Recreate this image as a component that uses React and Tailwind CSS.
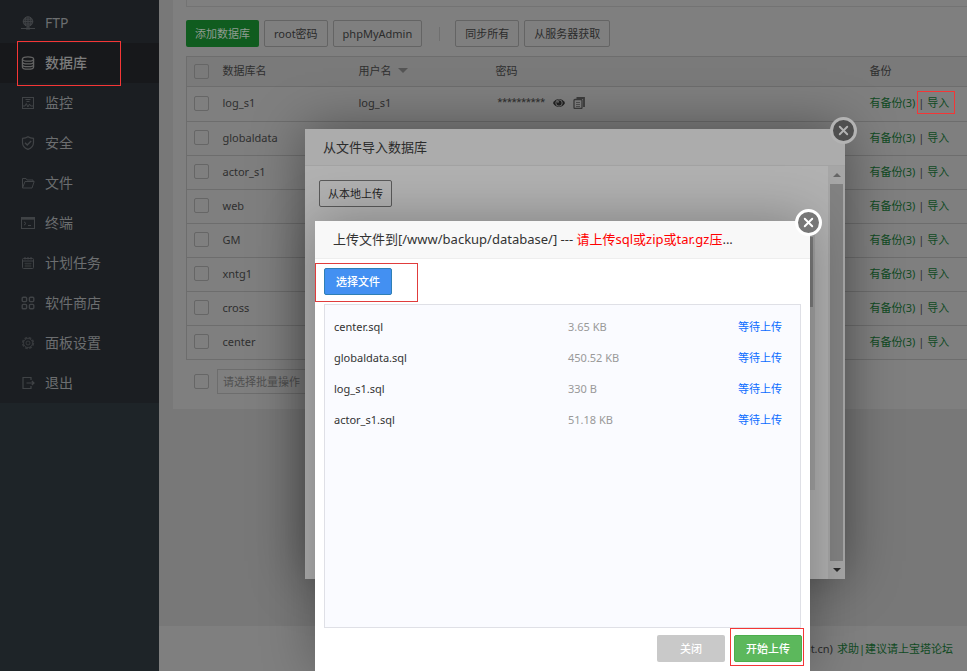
import { X } from "lucide-react";

const ICON = {
  width: 14,
  height: 14,
  viewBox: "0 0 14 14",
  fill: "none",
  stroke: "currentColor",
  strokeWidth: 1,
};

function FtpIcon() {
  return (
    <svg {...ICON}>
      <circle cx="7" cy="5.5" r="4.8" fill="currentColor" fillOpacity="0.35" />
      <path d="M2 5.5h10M7 1v9M3 3.2h8M3 8h8M5 1.2C3.8 4 3.8 7 5 9.8M9 1.2c1.2 2.8 1.2 5.8 0 8.6M7 10v2M0 12.5h14" />
      <path d="M5 12.5h4" strokeWidth="2" />
    </svg>
  );
}

function DatabaseIcon() {
  return (
    <svg {...ICON} strokeWidth="1.3">
      <ellipse cx="7" cy="3" rx="5.6" ry="2.2" />
      <path d="M1.4 3v8c0 1.2 2.4 2.2 5.6 2.2s5.6-1 5.6-2.2V3M1.4 5.7c0 1.2 2.4 2.2 5.6 2.2s5.6-1 5.6-2.2M1.4 8.4c0 1.2 2.4 2.2 5.6 2.2s5.6-1 5.6-2.2" />
    </svg>
  );
}

function MonitorIcon() {
  return (
    <svg {...ICON}>
      <rect x="1.5" y="1.5" width="11" height="11" />
      <path d="M4.5 3.5h5M5.5 5.5h3M2 10h2l1.3-2.5 1.6 3.5L8.5 8l1.2 2H12" />
    </svg>
  );
}

function ShieldIcon() {
  return (
    <svg {...ICON} strokeWidth="1.2">
      <path d="M7 .8c1.8 1.3 3.6 1.6 5.5 1.6v4c0 3.4-2 5.6-5.5 7-3.5-1.4-5.5-3.6-5.5-7v-4C3.4 2.4 5.2 2.1 7 .8z" />
      <path d="M4 6.8L6.2 9l4-4" strokeWidth="1.4" />
    </svg>
  );
}

function FolderIcon() {
  return (
    <svg {...ICON}>
      <path d="M1.5 12V2.5H5L6 4h6v2M1.5 12H11l2.2-6.5H4L1.5 12z" />
    </svg>
  );
}

function TerminalIcon() {
  return (
    <svg {...ICON}>
      <rect x=".5" y="1.5" width="13" height="11" />
      <path d="M0 2.5h14" strokeWidth="2.4" />
      <path d="M3 5.8l2 1.7-2 1.7M7 9.5h3" />
    </svg>
  );
}

function CalendarIcon() {
  return (
    <svg {...ICON}>
      <rect x="1.5" y="2.5" width="11" height="10" rx="1" />
      <path d="M1.5 5h11M4 1v2.5M7 1v2.5M10 1v2.5" />
      <path d="M3.5 7.5h7M3.5 10h7M5 6.5v5M7 6.5v5M9 6.5v5" strokeOpacity="0.5" />
    </svg>
  );
}

function AppsIcon() {
  return (
    <svg {...ICON} strokeWidth="1.4">
      <rect x="1.2" y="1.2" width="4.4" height="4.4" rx="1" />
      <rect x="8.4" y="1.2" width="4.4" height="4.4" rx="1" />
      <rect x="1.2" y="8.4" width="4.4" height="4.4" rx="1" />
      <rect x="8.4" y="8.4" width="4.4" height="4.4" rx="1" />
    </svg>
  );
}

function GearIcon() {
  return (
    <svg {...ICON}>
      <circle cx="7" cy="7" r="5.4" strokeWidth="1.6" strokeDasharray="2.8 1.44" strokeOpacity="0.7" />
      <circle cx="7" cy="7" r="4.5" strokeOpacity="0.7" />
      <circle cx="7" cy="7" r="2" strokeOpacity="0.7" />
    </svg>
  );
}

function ExitIcon() {
  return (
    <svg {...ICON} strokeWidth="1.2">
      <path d="M10 4V1.5H2v11h8V10M5.5 7H13M10.8 5L13 7l-2.2 2" />
    </svg>
  );
}

function EyeIcon() {
  return (
    <svg width="12" height="12" viewBox="0 0 12 12">
      <path d="M0 6C2.5.8 9.5.8 12 6 9.5 11.200 2.500 11.200 0 6z" fill="currentColor" />
      <circle cx="6" cy="6" r="3.2" fill="none" stroke="#7a7a7a" strokeWidth=".9" />
      <circle cx="5" cy="4.8" r=".9" fill="#7a7a7a" />
    </svg>
  );
}

function CopyIcon() {
  return (
    <svg width="12" height="12" viewBox="0 0 12 12" fill="none" stroke="currentColor">
      <path d="M3.5 1H11v9" strokeWidth="1.8" />
      <rect x="1" y="2.5" width="8" height="9" rx="1" strokeWidth="1.3" />
      <path d="M3 5.5h4M3 7.5h4M3 9.5h4" strokeWidth=".7" />
    </svg>
  );
}

const MENU = [
  { label: "FTP", Icon: FtpIcon },
  { label: "数据库", Icon: DatabaseIcon, active: true },
  { label: "监控", Icon: MonitorIcon },
  { label: "安全", Icon: ShieldIcon },
  { label: "文件", Icon: FolderIcon },
  { label: "终端", Icon: TerminalIcon },
  { label: "计划任务", Icon: CalendarIcon },
  { label: "软件商店", Icon: AppsIcon },
  { label: "面板设置", Icon: GearIcon },
  { label: "退出", Icon: ExitIcon },
];

const DATABASES = ["log_s1", "globaldata", "actor_s1", "web", "GM", "xntg1", "cross", "center"];

const FILES = [
  { name: "center.sql", size: "3.65 KB" },
  { name: "globaldata.sql", size: "450.52 KB" },
  { name: "log_s1.sql", size: "330 B" },
  { name: "actor_s1.sql", size: "51.18 KB" },
];

function Sidebar() {
  return (
    <nav className="w-[159px] shrink-0 bg-[#1e2428]">
      <ul className="bg-[#1b1e22] pt-[3px]">
        {MENU.map(({ label, Icon, active }) => (
          <li key={label} className="relative">
            <a
              href="#"
              className={
                active
                  ? "flex h-10 items-center gap-2.5 bg-[#17181b] pl-[21px] text-sm font-medium text-[#7c7c7c]"
                  : "flex h-10 items-center gap-2.5 pl-[21px] text-sm text-[#6c6e70]"
              }
            >
              <span className={active ? "text-[#626262]" : "text-[#404346]"}>
                <Icon />
              </span>
              {label}
            </a>
            {active && (
              <span className="pointer-events-none absolute -top-0.5 left-[17px] h-[45px] w-[104px] border border-[#f43636]" />
            )}
          </li>
        ))}
      </ul>
    </nav>
  );
}

function Check({ label }) {
  return (
    <input
      type="checkbox"
      aria-label={label}
      className="block size-[15px] appearance-none rounded-xs border border-[#666]"
    />
  );
}

function ToolButton({ children }) {
  return (
    <button className="h-[27px] rounded-xs border border-[#646464] px-[9px] text-[#2b2b2b]">{children}</button>
  );
}

function DatabaseTable() {
  return (
    <table className="mt-[9px] w-full table-fixed border-collapse border border-r-0 border-[#6d6d6d] text-left">
      <colgroup>
        <col className="w-9" />
        <col className="w-[136px]" />
        <col className="w-[137px]" />
        <col className="w-[374px]" />
        <col />
      </colgroup>
      <thead>
        <tr className="h-[30px] bg-[#7a7a7a] text-[#2f2f2f]">
          <th className="pl-[7px]">
            <Check label="全选" />
          </th>
          <th className="pb-0.5 font-normal">数据库名</th>
          <th className="pb-0.5 font-normal">
            <span className="flex items-center gap-1.5">
              用户名
              <span className="border-x-[5px] border-t-[5px] border-x-transparent border-t-[#555]" />
            </span>
          </th>
          <th className="pb-0.5 font-normal">密码</th>
          <th className="pb-0.5 font-normal">备份</th>
        </tr>
      </thead>
      <tbody>
        {DATABASES.map((name, i) => (
          <tr key={name} className="h-[34px] border-t border-[#6d6d6d] text-[#2f2f2f] first:h-[35px]">
            <td className="pb-0.5 pl-[7px]">
              <Check label={name} />
            </td>
            <td className="pb-0.5">{name}</td>
            <td className="pb-0.5">{i === 0 && name}</td>
            <td className="pb-0.5">
              {i === 0 && (
                <span className="flex items-center gap-2 pl-0.5">
                  <span className="font-['Roboto',sans-serif]">**********</span>
                  <button aria-label="显示密码" className="text-[#222]">
                    <EyeIcon />
                  </button>
                  <button aria-label="复制密码" className="text-[#3c3c3c]">
                    <CopyIcon />
                  </button>
                </span>
              )}
            </td>
            <td className="whitespace-nowrap pb-0.5">
              <a href="#" className="text-[#0f4a1f]">
                有备份(3)
              </a>
              <span className="relative">
                {" | "}
                <a href="#" className="text-[#0f4a1f]">
                  导入
                </a>
                {i === 0 && (
                  <span className="pointer-events-none absolute -inset-y-1 -right-1.5 left-0.5 border border-[#f43636]" />
                )}
              </span>
            </td>
          </tr>
        ))}
      </tbody>
    </table>
  );
}

function DatabasePage() {
  return (
    <div className="flex min-w-0 flex-1 flex-col bg-[#787878]">
      <main className="ml-3.5 bg-[#7f7f7f] pb-[15px] pl-[13px]">
        <div className="h-[7px] border-b border-l border-[#737373]" />
        <div className="mt-[13px] flex items-center gap-[5px]">
          <button className="h-[27px] rounded-xs bg-[#105c1f] px-[9px] text-[#8f9b91]">添加数据库</button>
          <ToolButton>root密码</ToolButton>
          <ToolButton>phpMyAdmin</ToolButton>
          <span className="ml-3 mr-2.5 h-3.5 w-px bg-[#6f6f6f]" />
          <ToolButton>同步所有</ToolButton>
          <ToolButton>从服务器获取</ToolButton>
        </div>
        <DatabaseTable />
        <div className="mt-[9px] flex items-center gap-2 pl-2">
          <Check label="全选批量操作" />
          <select
            aria-label="批量操作"
            className="h-[25px] w-40 appearance-none border border-[#6d6d6d] px-[5px] text-[#505050]"
          >
            <option>请选择批量操作</option>
          </select>
        </div>
      </main>
      <footer className="mt-auto flex h-[45px] items-center justify-end gap-1 bg-[#7f7f7f] pr-3.5 text-[#2a2a2a]">
        <span>(bt.cn)</span>
        <a href="#" className="text-[#0f4a1f]">
          求助|建议请上宝塔论坛
        </a>
      </footer>
    </div>
  );
}

function ImportDialog() {
  return (
    <section
      role="dialog"
      aria-label="从文件导入数据库"
      className="absolute left-[305px] top-[129px] flex h-[450px] w-[540px] flex-col bg-[#b1b1b1] shadow-[0_0_50px_rgba(0,0,0,0.4)]"
    >
      <h2 className="h-[37px] border-b border-[#a3a3a3] bg-[#acacac] pl-[18px] text-[13px] leading-9 text-[#2b2b2b]">
        从文件导入数据库
      </h2>
      <div className="flex flex-1">
        <div className="flex-1 pl-3.5 pr-[13px] pt-3.5">
          <button className="h-[27px] rounded-xs border border-[#5a5a5a] px-2 text-[#1f1f1f]">从本地上传</button>
          <div className="mt-3.5 flex h-[269px] justify-end bg-[#a3a3a3] pr-0.5 pt-4">
            <span className="h-[70px] w-3 bg-[#7c7c7c]" />
          </div>
        </div>
        <div className="flex w-[17px] flex-col items-center bg-[#a6a6a6]">
          <span className="my-[7px] border-x-4 border-b-4 border-x-transparent border-b-[#666]" />
          <span className="w-[13px] flex-1 bg-[#828282]" />
          <span className="my-[7px] border-x-4 border-t-4 border-x-transparent border-t-[#2a2a2a]" />
        </div>
      </div>
      <button
        aria-label="关闭"
        className="absolute -right-3 -top-3 flex size-[27px] items-center justify-center rounded-full border-[3px] border-[#b3b3b3] bg-[#4f4f4f] text-[#b3b3b3]"
      >
        <X size={15} strokeWidth={3} />
      </button>
    </section>
  );
}

function UploadDialog() {
  return (
    <section
      role="dialog"
      aria-label="上传文件"
      className="absolute bottom-0 left-[315px] top-[221px] flex w-[495px] flex-col bg-white shadow-[0_0_50px_rgba(0,0,0,0.3)]"
    >
      <h2 className="h-[38px] border-b border-[#eee] bg-[#f8f8f8] pl-[18px] text-[13px] leading-9 text-[#333]">
        上传文件到[/www/backup/database/] --- <span className="text-[#f00]">请上传sql或zip或tar.gz压</span>...
      </h2>
      <div className="relative px-[9px] pt-[9px]">
        <button className="h-[27px] w-[68px] rounded-xs border border-[#2f7fb5] bg-[#4390f2] font-medium text-white">
          选择文件
        </button>
        <span className="pointer-events-none absolute left-0 top-1 h-[39px] w-[103px] border border-[#e03c3c]" />
      </div>
      <ul className="mx-[9px] mt-[9px] flex-1 border border-[#dfe0e6] bg-[#fafbff] px-[9px] pt-1.5">
        {FILES.map(({ name, size }) => (
          <li key={name} className="flex h-[31px] items-center">
            <span className="w-[234px] text-[#333]">{name}</span>
            <span className="flex-1 text-[#999]">{size}</span>
            <span className="pr-[9px] text-[#0a6cff]">等待上传</span>
          </li>
        ))}
      </ul>
      <div className="flex justify-end gap-[9px] pb-[9px] pl-[9px] pr-2 pt-[7px] font-medium text-white">
        <button className="h-[27px] w-[68px] rounded-xs bg-[#c9c9c9]">关闭</button>
        <span className="relative">
          <button className="h-[27px] w-[68px] rounded-xs border border-[#4cae4c] bg-[#5cb85c]">开始上传</button>
          <span className="pointer-events-none absolute -bottom-1 -left-1 -right-0.5 -top-[7px] border border-[#f43636]" />
        </span>
      </div>
      <button
        aria-label="关闭"
        className="absolute -right-3 -top-3 flex size-[27px] items-center justify-center rounded-full border-[3px] border-white bg-[#777] text-white"
      >
        <X size={15} strokeWidth={3} />
      </button>
    </section>
  );
}

export default function App() {
  return (
    <div className="relative flex min-h-screen overflow-hidden font-['Noto_Sans','Noto_Sans_CJK_SC',sans-serif] text-[11px] leading-4">
      <Sidebar />
      <DatabasePage />
      <ImportDialog />
      <UploadDialog />
    </div>
  );
}
